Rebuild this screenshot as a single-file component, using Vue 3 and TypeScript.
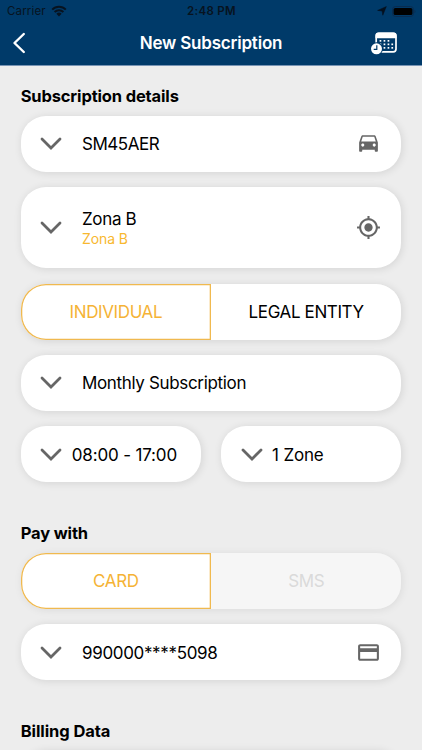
<script setup lang="ts">
interface Segment {
  label: string
  state: 'active' | 'idle' | 'disabled'
}

const profileTabs: Segment[] = [
  { label: 'INDIVIDUAL', state: 'active' },
  { label: 'LEGAL ENTITY', state: 'idle' },
]
const paymentTabs: Segment[] = [
  { label: 'CARD', state: 'active' },
  { label: 'SMS', state: 'disabled' },
]
const chevron = 'M2 2 11 11 20 2'
const dots = [
  [15.6, 9], [19.6, 9], [23.6, 9],
  [15.6, 12.5], [19.6, 12.5], [23.6, 12.5], [27.4, 12.5],
  [19.6, 16], [23.6, 16], [27.4, 16],
]
</script>

<template>
  <div class="screen">
    <header class="header">
      <div class="status">
        <div class="network">
          <span class="carrier">Carrier</span>
          <svg class="wifi" viewBox="0 0 16 12" width="16" height="12">
            <path d="M1.2 4.6a9.6 9.6 0 0 1 13.6 0M3.6 7a6.2 6.2 0 0 1 8.8 0" fill="none" stroke="#071320" stroke-width="2" />
            <path d="M8 11.4 5.4 8.8a3.7 3.7 0 0 1 5.2 0z" fill="#071320" />
          </svg>
        </div>
        <span class="clock">2:48 PM</span>
        <div class="power">
          <svg class="location" viewBox="0 0 10 10" width="10" height="10">
            <path d="M9.3.6 5.8 9.2 5.1 5 .6 4.4z" fill="#04101e" stroke="#04101e" stroke-width=".5" stroke-linejoin="round" />
          </svg>
          <svg class="battery" viewBox="0 0 24 11" width="24" height="11">
            <rect x=".5" y=".5" width="21" height="10" rx="3" fill="none" stroke="#092c50" />
            <rect x="1.6" y="2" width="18.8" height="7" rx="1.6" fill="#000" />
            <path d="M22.5 3.8q1 .5 1 1.7t-1 1.7z" fill="#092c50" />
          </svg>
        </div>
      </div>
      <div class="navbar">
        <svg class="back" viewBox="0 0 14 22" width="14" height="22">
          <path d="M11.8 2 2.5 11l9.3 9" fill="none" stroke="#fff" stroke-width="2.4" stroke-linecap="round" stroke-linejoin="round" />
        </svg>
        <h1 class="title">New Subscription</h1>
        <svg class="schedule" viewBox="0 0 28 24" width="28" height="24">
          <rect x="6.2" y="2.4" width="19.8" height="18.4" rx="2.8" fill="none" stroke="#fff" stroke-width="1.7" />
          <path d="M5.500 7.200V4.400a2.800 2.800 0 0 1 2.800-2.800h15.400A2.800 2.800 0 0 1 26.500 4.400v2.800z" fill="#fff" />
          <rect v-for="([x, y], i) in dots" :key="i" :x="x - 6" :y="y" width="1.7" height="1.7" fill="#fff" />
          <circle cx="6.5" cy="17.8" r="6.5" fill="#003a69" />
          <circle cx="6.5" cy="17.8" r="5.5" fill="#fff" />
          <path d="M6.8 14.300v4H3.7" fill="none" stroke="#003a69" stroke-width="1.2" />
        </svg>
      </div>
    </header>

    <main class="content">
      <h2 class="heading">Subscription details</h2>

      <div class="card">
        <svg class="chevron" viewBox="0 0 22 13" width="22" height="13"><path :d="chevron" /></svg>
        <span class="value plate">SM45AER</span>
        <svg class="icon" viewBox="0 0 24 24" width="25" height="25">
          <path d="M18.92 5.01C18.72 4.42 18.16 4 17.5 4h-11c-.66 0-1.21.42-1.42 1.01L3 11v8c0 .55.45 1 1 1h1c.55 0 1-.45 1-1v-1h12v1c0 .55.45 1 1 1h1c.55 0 1-.45 1-1v-8zM6.5 15c-.83 0-1.5-.67-1.5-1.5S5.67 12 6.5 12s1.5.67 1.5 1.5S7.33 15 6.5 15m11 0c-.83 0-1.5-.67-1.5-1.5s.67-1.5 1.5-1.5 1.5.67 1.5 1.5-.67 1.5-1.5 1.5M5 10l1.5-4.5h11L19 10z" />
        </svg>
      </div>

      <div class="card tall">
        <svg class="chevron" viewBox="0 0 22 13" width="22" height="13"><path :d="chevron" /></svg>
        <span class="stack">
          <span class="value zona">Zona B</span>
          <span class="sub">Zona B</span>
        </span>
        <svg class="icon" viewBox="0 0 24 24" width="25" height="25">
          <path d="M12 8c-2.21 0-4 1.79-4 4s1.79 4 4 4 4-1.79 4-4-1.79-4-4-4m8.94 3c-.46-4.17-3.77-7.48-7.94-7.94V1h-2v2.06C6.83 3.52 3.52 6.83 3.06 11H1v2h2.06c.46 4.17 3.77 7.48 7.94 7.94V23h2v-2.06c4.17-.46 7.48-3.77 7.94-7.94H23v-2zM12 19c-3.87 0-7-3.13-7-7s3.13-7 7-7 7 3.13 7 7-3.13 7-7 7" />
        </svg>
      </div>

      <div class="segments profile">
        <button v-for="t in profileTabs" :key="t.label" class="segment" :class="t.state"><span>{{ t.label }}</span></button>
      </div>

      <div class="card">
        <svg class="chevron" viewBox="0 0 22 13" width="22" height="13"><path :d="chevron" /></svg>
        <span class="value plan">Monthly Subscription</span>
      </div>

      <div class="pair">
        <div class="card compact">
          <svg class="chevron" viewBox="0 0 22 13" width="22" height="13"><path :d="chevron" /></svg>
          <span class="value hours">08:00 - 17:00</span>
        </div>
        <div class="card compact">
          <svg class="chevron" viewBox="0 0 22 13" width="22" height="13"><path :d="chevron" /></svg>
          <span class="value zones">1 Zone</span>
        </div>
      </div>

      <h2 class="heading pay">Pay with</h2>

      <div class="segments payment">
        <button v-for="t in paymentTabs" :key="t.label" class="segment" :class="t.state"><span>{{ t.label }}</span></button>
      </div>

      <div class="card">
        <svg class="chevron" viewBox="0 0 22 13" width="22" height="13"><path :d="chevron" /></svg>
        <span class="value number">990000****5098</span>
        <svg class="icon" viewBox="0 0 24 24" width="25" height="25">
          <path d="M20 4H4c-1.11 0-1.99.89-1.99 2L2 18c0 1.11.89 2 2 2h16c1.11 0 2-.89 2-2V6c0-1.11-.89-2-2-2m0 14H4v-6.500h16zm0-10H4V6h16z" />
        </svg>
      </div>

      <h2 class="heading billing">Billing Data</h2>
      <div class="card"></div>
    </main>
  </div>
</template>

<style>
body {
  margin: 0;
  overflow: hidden;
}
</style>

<style scoped>
.screen {
  width: 422px;
  height: 750px;
  overflow: hidden;
  background: #ededed;
  color: #000;
  font-family: Inter, "Liberation Sans", sans-serif;
}
.header {
  box-sizing: border-box;
  height: 66px;
  background: #003a69;
  border-bottom: 1px solid #7894b4;
}
.status {
  display: grid;
  grid-template-columns: 1fr auto 1fr;
  align-items: center;
  height: 22px;
  padding: 0 6px 0 7px;
  font-size: 11.5px;
  color: #071320;
}
.network,
.power {
  display: flex;
  align-items: center;
  gap: 5px;
}
.power {
  justify-content: flex-end;
}
.carrier {
  letter-spacing: 0.15px;
}
.clock {
  font-weight: 600;
  letter-spacing: 0.3px;
}
.navbar {
  display: grid;
  grid-template-columns: 1fr auto 1fr;
  align-items: center;
  height: 42px;
  padding: 0 24px 0 12px;
}
.title {
  margin: 0 -12px 0 0;
  font-size: 17px;
  font-weight: 600;
  letter-spacing: -0.2px;
  color: #fff;
}
.schedule {
  justify-self: end;
}
.content {
  display: flex;
  flex-direction: column;
  gap: 15.3px;
  padding: 18px 20.7px 0;
}
.heading {
  margin: 0 0 -7.5px;
  height: 24px;
  flex: none;
  line-height: 24px;
  font-size: 16.5px;
  font-weight: 700;
  letter-spacing: -0.15px;
  white-space: nowrap;
}
.heading.pay {
  margin-top: 23.5px;
  margin-bottom: -7.2px;
}
.heading.billing {
  margin-top: 22.9px;
  letter-spacing: -0.08px;
}
.card {
  box-sizing: border-box;
  display: flex;
  flex: none;
  align-items: center;
  gap: 19.8px;
  height: 56px;
  padding: 0 20.8px 0 19.5px;
  border-radius: 25px;
  background: #fff;
  box-shadow: 1px 1px 8px rgba(0, 0, 0, 0.11);
}
.card.tall {
  height: 81.3px;
}
.card.compact {
  flex: 1;
  gap: 9.5px;
  padding-right: 0;
}
.pair {
  display: flex;
  gap: 20px;
}
.chevron {
  flex: none;
  fill: none;
  stroke: #666;
  stroke-width: 2.8;
  stroke-linecap: round;
}
.icon {
  flex: none;
  margin-left: auto;
  fill: #666;
}
.value {
  font-size: 17px;
  line-height: 22px;
  letter-spacing: -0.34px;
  white-space: nowrap;
}
.plate {
  letter-spacing: -0.46px;
}
.plan,
.hours,
.zones,
.number {
  padding-top: 1px;
}
.hours,
.zones {
  letter-spacing: -0.15px;
}
.stack {
  display: flex;
  flex-direction: column;
}
.sub {
  font-size: 14px;
  line-height: 18px;
  letter-spacing: -0.1px;
  color: #f8b830;
}
.segments {
  display: flex;
  flex: none;
  height: 56px;
  border-radius: 25px;
  box-shadow: 1px 1px 8px rgba(0, 0, 0, 0.11);
}
.segments.payment {
  box-shadow: 1px 1px 8px rgba(0, 0, 0, 0.08);
}
.segment {
  box-sizing: border-box;
  flex: 1;
  margin: 0;
  padding: 0;
  border: 0;
  background: #fff;
  color: #000;
  font: inherit;
  font-size: 17px;
  letter-spacing: -0.38px;
}
.segment:first-child {
  border-radius: 25px 0 0 25px;
}
.segment:last-child {
  border-radius: 0 25px 25px 0;
}
.segment.active {
  box-shadow: inset 0 0 0 1.3px #f0b94f;
  color: #f5b335;
}
.segment.disabled {
  background: #f6f6f6;
  color: #dadada;
}
</style>
